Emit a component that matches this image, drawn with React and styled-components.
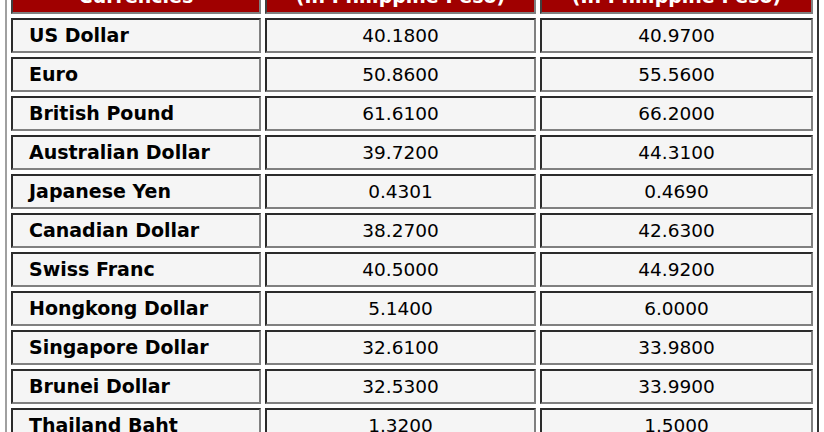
import React from 'react'
import styled, { createGlobalStyle } from 'styled-components'

const GlobalStyle = createGlobalStyle`
  html, body {
    margin: 0;
    padding: 0;
    background: #ffffff;
    overflow: hidden;
  }
  body {
    font-family: "DejaVu Sans", Verdana, sans-serif;
  }
`

const Page = styled.div`
  padding-left: 5px;
  margin-top: -49px;
`

const RateTable = styled.table`
  width: 814px;
  table-layout: fixed;
  border-collapse: separate;
  border-spacing: 4px;
  border: 2px solid;
  border-color: #a0a0a0 #333333 #333333 #a0a0a0;
`

const HeadCell = styled.th`
  box-sizing: border-box;
  width: ${props => props.w}px;
  background: #a00000;
  color: #ffffff;
  font-weight: bold;
  font-size: 19px;
  line-height: 23px;
  padding: 3px 6px 4px;
  text-align: center;
  border: 2px solid;
  border-color: #404040 #808080 #808080 #404040;
`

const Cell = styled.td`
  box-sizing: border-box;
  height: 35px;
  background: #f5f5f5;
  color: #000000;
  line-height: 31px;
  padding: 0;
  white-space: nowrap;
  border: 2px solid;
  border-color: #2b2b2b #808080 #808080 #2b2b2b;
`

const NameCell = styled(Cell)`
  font-weight: bold;
  font-size: 19px;
  padding-left: 16px;
  text-align: left;
`

const RateCell = styled(Cell)`
  font-size: 18.5px;
  text-align: center;
`

const rates = [
  ['US Dollar', '40.1800', '40.9700'],
  ['Euro', '50.8600', '55.5600'],
  ['British Pound', '61.6100', '66.2000'],
  ['Australian Dollar', '39.7200', '44.3100'],
  ['Japanese Yen', '0.4301', '0.4690'],
  ['Canadian Dollar', '38.2700', '42.6300'],
  ['Swiss Franc', '40.5000', '44.9200'],
  ['Hongkong Dollar', '5.1400', '6.0000'],
  ['Singapore Dollar', '32.6100', '33.9800'],
  ['Brunei Dollar', '32.5300', '33.9900'],
  ['Thailand Baht', '1.3200', '1.5000'],
]

export default function App() {
  return (
    <Page>
      <GlobalStyle />
      <RateTable>
        <thead>
          <tr>
            <HeadCell w={250}>Foreign<br />Currencies</HeadCell>
            <HeadCell w={271}>Buying Rate<br />(In Philippine Peso)</HeadCell>
            <HeadCell w={273}>Selling Rate<br />(In Philippine Peso)</HeadCell>
          </tr>
        </thead>
        <tbody>
          {rates.map(([name, buy, sell]) => (
            <tr key={name}>
              <NameCell>{name}</NameCell>
              <RateCell>{buy}</RateCell>
              <RateCell>{sell}</RateCell>
            </tr>
          ))}
        </tbody>
      </RateTable>
    </Page>
  )
}
